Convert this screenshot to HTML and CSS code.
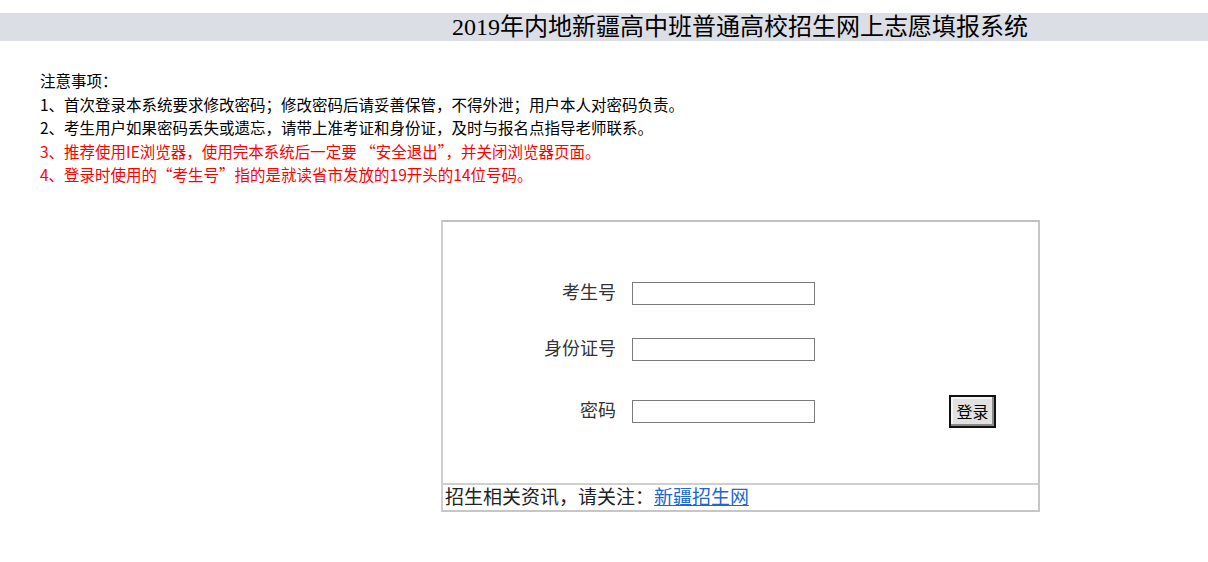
FILE: index.html
```html
<!DOCTYPE html>
<html lang="zh-CN">
<head>
  <meta charset="UTF-8">
  <title>2019年内地新疆高中班普通高校招生网上志愿填报系统</title>
  <link rel="stylesheet" href="styles.css">
</head>
<body>
  <div class="top-bar">2019年内地新疆高中班普通高校招生网上志愿填报系统</div>

  <div class="notice">
    <p>注意事项：</p>
    <p>1、首次登录本系统要求修改密码；修改密码后请妥善保管，不得外泄；用户本人对密码负责。</p>
    <p>2、考生用户如果密码丢失或遗忘，请带上准考证和身份证，及时与报名点指导老师联系。</p>
    <p class="red">3、推荐使用IE浏览器，使用完本系统后一定要 “安全退出”，并关闭浏览器页面。</p>
    <p class="red">4、登录时使用的“考生号”指的是就读省市发放的19开头的14位号码。</p>
  </div>

  <div class="login-box">
    <form class="login-form" onsubmit="return false">
      <label for="ksh">考生号</label>
      <input type="text" id="ksh">
      <span></span>

      <label for="sfzh">身份证号</label>
      <input type="text" id="sfzh">
      <span></span>

      <label for="mm">密码</label>
      <input type="password" id="mm">
      <button type="submit" class="login-btn">登录</button>
    </form>
    <div class="footer-row">招生相关资讯，请关注：<a href="#">新疆招生网</a></div>
  </div>
</body>
</html>
```

FILE: styles.css
```css
body {
  margin: 0;
  background: #fff;
  color: #000;
  font-family: "Liberation Serif", "Noto Sans CJK SC", serif;
}

.top-bar {
  margin-top: 13px;
  height: 28px;
  line-height: 28px;
  background-color: #dcdee6;
  padding-left: 452px;
  font-size: 24px;
  white-space: nowrap;
  overflow: hidden;
}

.notice {
  margin-top: 28px;
  padding-left: 40px;
  font-family: "Noto Sans CJK SC", "Liberation Sans", sans-serif;
  font-size: 15.5px;
  line-height: 23.5px;
}

.notice p {
  margin: 0;
  white-space: nowrap;
}

.notice .red {
  color: #ff0000;
}

.login-box {
  box-sizing: border-box;
  width: 599px;
  margin: 33px 0 0 441px;
  border: 2px solid #c6c6c6;
  border-top-color: #c0c0c0;
  border-left-color: #cfcfcf;
}

.login-form {
  display: grid;
  grid-template-columns: 173px 183px 1fr;
  column-gap: 16px;
  row-gap: 33.5px;
  align-items: center;
  padding: 60px 0 55px;
  margin: 0;
}

.login-form label {
  text-align: right;
  font-size: 18px;
  color: #333;
  line-height: 23px;
}

.login-form input {
  box-sizing: border-box;
  width: 183px;
  height: 23px;
  margin: 0;
  border: 1px solid #7a7a7a;
  padding: 1px 3px;
  font-size: 14px;
}

.login-btn {
  justify-self: start;
  margin-left: 118px;
  width: 47px;
  height: 33px;
  padding: 0;
  background: #e1e1e1;
  border: 2px solid #111;
  box-shadow: inset -2px -2px 0 #8a8a8a, inset 2px 2px 0 #f4f4f4;
  font-family: "Noto Sans CJK SC", sans-serif;
  font-size: 16px;
  color: #000;
  cursor: pointer;
}

.footer-row {
  border-top: 2px solid #cfcfcf;
  height: 25px;
  line-height: 25px;
  padding-left: 2px;
  font-size: 19px;
  color: #222;
  white-space: nowrap;
}

.footer-row a {
  color: #2068d0;
}
```
